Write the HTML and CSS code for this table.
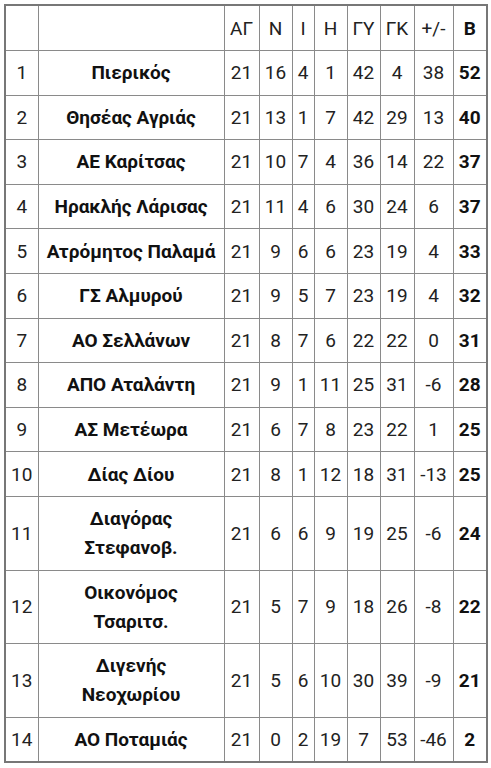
FILE: index.html
```html
<!DOCTYPE html>
<html lang="el">
<head>
<meta charset="utf-8">
<link rel="stylesheet" href="styles.css">
</head>
<body>
<table class="standings">
  <colgroup>
    <col class="c-pos"><col class="c-team"><col class="c-ag"><col class="c-n"><col class="c-i"><col class="c-h"><col class="c-gy"><col class="c-gk"><col class="c-diff"><col class="c-b">
  </colgroup>
  <thead>
    <tr><th></th><th></th><th>ΑΓ</th><th>Ν</th><th>Ι</th><th>Η</th><th>ΓΥ</th><th>ΓΚ</th><th>+/-</th><th class="pts">Β</th></tr>
  </thead>
  <tbody>
    <tr><td>1</td><td class="team">Πιερικός</td><td>21</td><td>16</td><td>4</td><td>1</td><td>42</td><td>4</td><td>38</td><td class="pts">52</td></tr>
    <tr><td>2</td><td class="team">Θησέας Αγριάς</td><td>21</td><td>13</td><td>1</td><td>7</td><td>42</td><td>29</td><td>13</td><td class="pts">40</td></tr>
    <tr><td>3</td><td class="team">ΑΕ Καρίτσας</td><td>21</td><td>10</td><td>7</td><td>4</td><td>36</td><td>14</td><td>22</td><td class="pts">37</td></tr>
    <tr><td>4</td><td class="team">Ηρακλής Λάρισας</td><td>21</td><td>11</td><td>4</td><td>6</td><td>30</td><td>24</td><td>6</td><td class="pts">37</td></tr>
    <tr><td>5</td><td class="team">Ατρόμητος Παλαμά</td><td>21</td><td>9</td><td>6</td><td>6</td><td>23</td><td>19</td><td>4</td><td class="pts">33</td></tr>
    <tr><td>6</td><td class="team">ΓΣ Αλμυρού</td><td>21</td><td>9</td><td>5</td><td>7</td><td>23</td><td>19</td><td>4</td><td class="pts">32</td></tr>
    <tr><td>7</td><td class="team">ΑΟ Σελλάνων</td><td>21</td><td>8</td><td>7</td><td>6</td><td>22</td><td>22</td><td>0</td><td class="pts">31</td></tr>
    <tr><td>8</td><td class="team">ΑΠΟ Αταλάντη</td><td>21</td><td>9</td><td>1</td><td>11</td><td>25</td><td>31</td><td>-6</td><td class="pts">28</td></tr>
    <tr><td>9</td><td class="team">ΑΣ Μετέωρα</td><td>21</td><td>6</td><td>7</td><td>8</td><td>23</td><td>22</td><td>1</td><td class="pts">25</td></tr>
    <tr><td>10</td><td class="team">Δίας Δίου</td><td>21</td><td>8</td><td>1</td><td>12</td><td>18</td><td>31</td><td>-13</td><td class="pts">25</td></tr>
    <tr><td>11</td><td class="team">Διαγόρας<br>Στεφανοβ.</td><td>21</td><td>6</td><td>6</td><td>9</td><td>19</td><td>25</td><td>-6</td><td class="pts">24</td></tr>
    <tr><td>12</td><td class="team">Οικονόμος<br>Τσαριτσ.</td><td>21</td><td>5</td><td>7</td><td>9</td><td>18</td><td>26</td><td>-8</td><td class="pts">22</td></tr>
    <tr><td>13</td><td class="team">Διγενής<br>Νεοχωρίου</td><td>21</td><td>5</td><td>6</td><td>10</td><td>30</td><td>39</td><td>-9</td><td class="pts">21</td></tr>
    <tr><td>14</td><td class="team">ΑΟ Ποταμιάς</td><td>21</td><td>0</td><td>2</td><td>19</td><td>7</td><td>53</td><td>-46</td><td class="pts">2</td></tr>
  </tbody>
</table>
</body>
</html>
```

FILE: styles.css
```css
html, body {
  margin: 0;
  padding: 0;
  background: #ffffff;
}
body {
  padding: 4px 0 0 4px;
  font-family: Roboto, "Noto Sans", Arial, sans-serif;
  color: #222;
}
.standings {
  border-collapse: collapse;
  table-layout: fixed;
  width: 482px;
  border: 2px solid #777;
  font-size: 19px;
  background: #fff;
}
.c-pos { width: 33px; }
.c-team { width: 186px; }
.c-ag { width: 35px; }
.c-n { width: 33px; }
.c-i { width: 22px; }
.c-h { width: 33px; }
.c-gy { width: 33px; }
.c-gk { width: 34px; }
.c-diff { width: 39px; }
.c-b { width: 34px; }
.standings th,
.standings td {
  border: 1px solid #8a8a8a;
  padding: 7.3px 0;
  line-height: 29px;
  text-align: center;
  font-weight: 400;
  white-space: nowrap;
}
.standings thead th {
  height: 30px;
  padding: 7px 0;
}
.standings .team {
  font-weight: 700;
  color: #111;
}
.standings .pts {
  font-weight: 700;
  color: #111;
}
```
